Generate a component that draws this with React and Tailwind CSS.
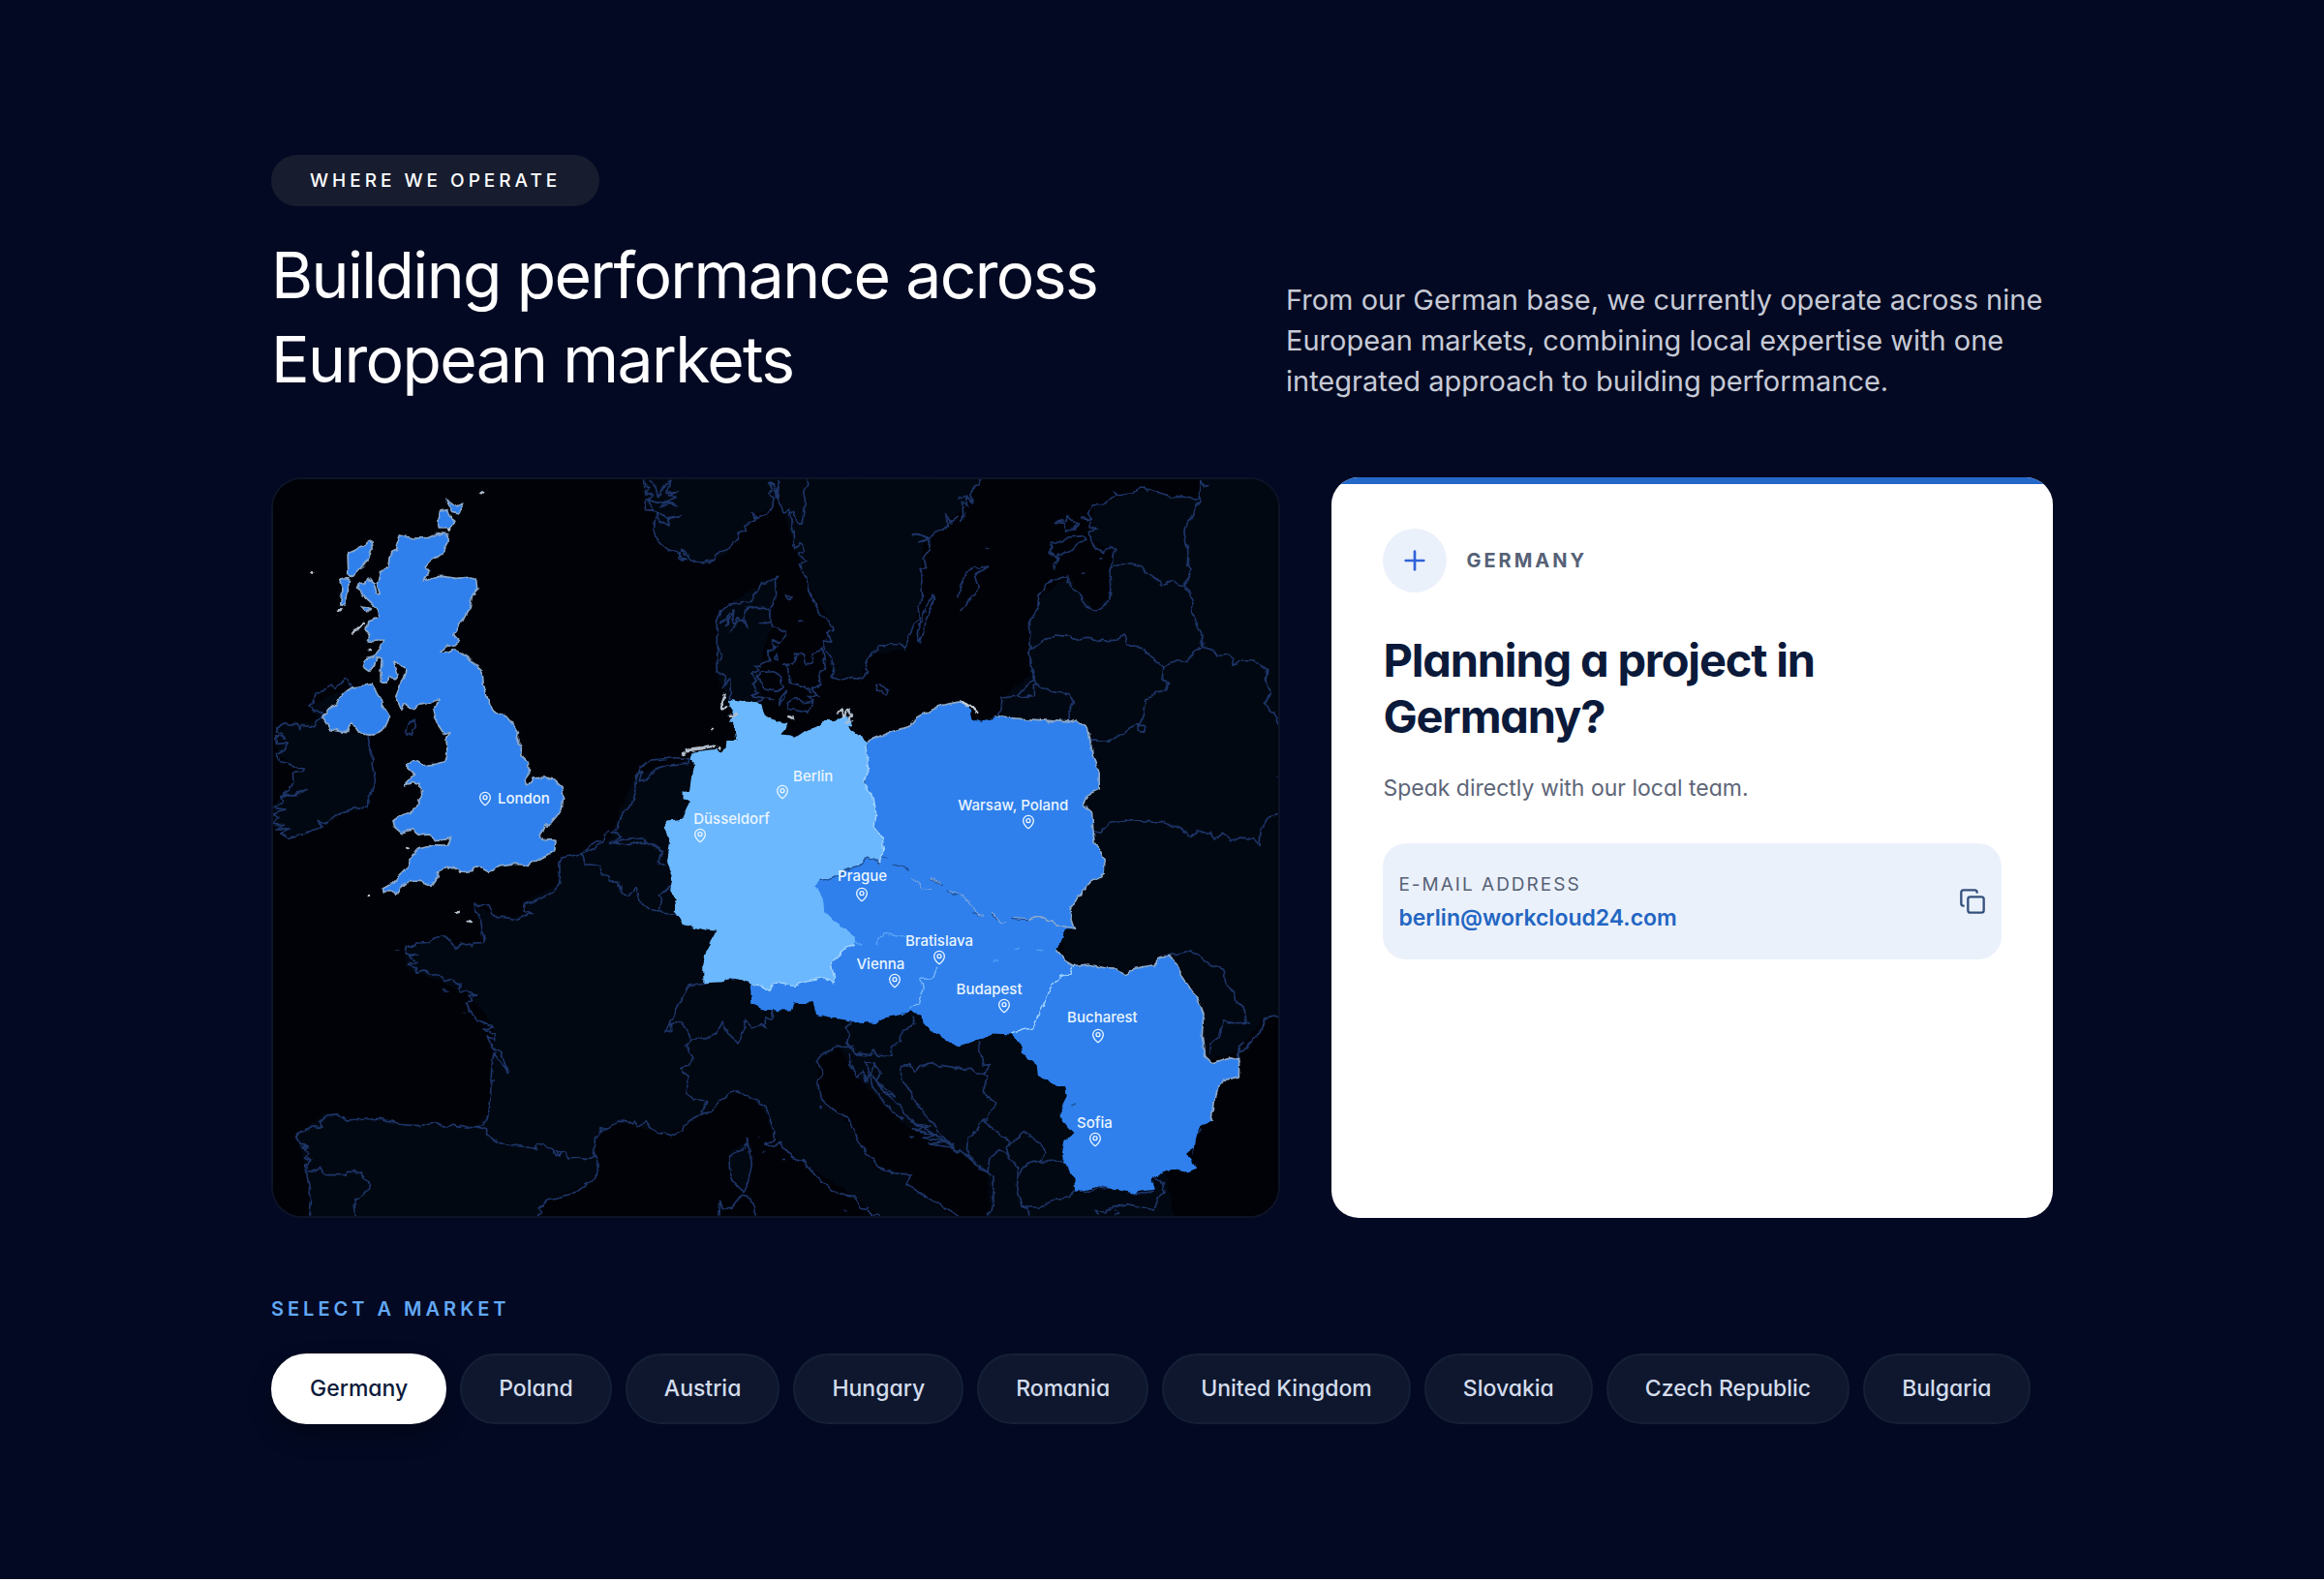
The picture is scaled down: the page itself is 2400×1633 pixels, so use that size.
import React, { useState } from 'react';
import { Copy, MapPin, Plus } from 'lucide-react';

const MARKETS = [
  'Germany',
  'Poland',
  'Austria',
  'Hungary',
  'Romania',
  'United Kingdom',
  'Slovakia',
  'Czech Republic',
  'Bulgaria',
];

const EMAIL = 'berlin@workcloud24.com';

// The map drawing uses this view box, city coordinates are in the same units
const VIEW = { x: 39, y: 45, width: 3111, height: 2283 };

const CITIES = [
  { name: 'London', label: [734, 1035], pin: [694, 1035] },
  { name: 'Berlin', label: [1648, 965], pin: [1615, 1015] },
  { name: 'Düsseldorf', label: [1340, 1098], pin: [1361, 1150] },
  { name: 'Warsaw, Poland', label: [2158, 1055], pin: [2376, 1107] },
  { name: 'Prague', label: [1786, 1276], pin: [1861, 1330] },
  { name: 'Bratislava', label: [1995, 1474], pin: [2101, 1526] },
  { name: 'Vienna', label: [1844, 1547], pin: [1962, 1598] },
  { name: 'Budapest', label: [2153, 1624], pin: [2301, 1677] },
  { name: 'Bucharest', label: [2496, 1713], pin: [2593, 1768] },
  { name: 'Sofia', label: [2526, 2040], pin: [2582, 2090] },
];

const LAND = [
  // Ireland
  'M270 690L150 750L190 790L60 810L50 900L130 940L70 1020L30 1060L30 1110L80 1150L150 1140L240 1080L330 1065L355 980L330 850L190 785Z',
  // Scandinavia
  'M1185 40L1190 120L1220 160L1220 220L1300 280L1360 305L1440 280L1480 220L1530 155L1590 130L1600 60L1620 150L1645 240L1670 300L1700 380L1770 500L1740 560L1775 660L1860 655L1880 590L1990 570L2040 430L2050 240L2160 150L2230 40Z',
  'M1415 640L1415 480L1450 430L1600 345L1580 500L1540 640L1550 730L1440 730Z',
  // East
  'M3160 40L2900 40L2908 105L2720 80L2580 130L2570 230L2640 270L2625 410L2580 450L2500 350L2420 400L2380 480L2380 650L2300 720L2280 785L2400 900L2500 1600L2900 1850L3020 1820L3100 1720L3160 1705Z',
  // West, Italy and the Balkans
  'M1325 910L1160 960L1110 1080L1080 1160L920 1230L920 1300L820 1350L830 1395L720 1400L660 1360L690 1480L600 1490L570 1460L450 1500L450 1560L480 1570L650 1640L720 1740L720 1820L705 2000L670 2050L440 2040L200 2010L110 2080L150 2200L155 2340L850 2340L880 2285L1010 2220L1045 2190L1035 2080L1080 2040L1110 2030L1250 2080L1370 2010L1460 1940L1540 1970L1600 2095L1700 2180L1830 2260L1920 2340L2160 2340L2010 2240L2000 2195L1900 2180L1820 2040L1730 1960L1720 1850L1790 1805L1850 1900L2000 2050L2160 2130L2250 2190L2260 2340L2830 2340L2800 2200L2500 1800L1700 1500Z',
  'M1500 2100L1450 2130L1450 2180L1495 2250L1520 2160Z',
];

// Coastlines and borders of the countries that are not highlighted, one group per map sector
const OUTLINES = [
  {
    at: 'translate(0 0)',
    d: [
      'M285 690L270 680L262 664L245 680L232 690L215 685L205 695L185 700L172 705L165 735L150 750L165 765L192 768L190 785L172 795L165 812L125 808L122 820L115 802L60 806L52 828L70 850L50 842L52 865L85 862L70 885L46 895L60 920L90 925L112 938L136 938L130 952L100 955L102 980L90 1005L66 1020L100 1022L145 1008L110 1025L62 1025L70 1045L40 1062L75 1068L36 1080L60 1095L40 1105L68 1120L50 1130L95 1130L62 1142L85 1156L140 1142L175 1125L190 1118L180 1105L200 1112L240 1080L280 1068L292 1058L328 1066L330 1040L345 1010L355 975L345 925L350 905L338 880L330 842',
      'M448 830L455 805L475 792L482 808L468 832L450 834Z',
      'M1000 1195L1030 1172L1062 1165L1060 1145L1080 1130',
    ],
  },
  {
    at: 'translate(1080 0)',
    d: [
      'M108 45L112 70L125 75L112 88L135 95L112 112L114 140L135 142L120 110L150 118L175 112L160 135L180 122L210 125L175 115L205 105L180 95L215 85L175 88L190 50L160 75L150 100L140 60L125 50',
      'M140 145L170 165L220 158L180 168L188 188L155 175L142 150L138 205L150 235L180 262L215 275L235 295L215 292L225 265L245 292L285 305L325 292L330 280L365 262L395 230L400 210L420 208L415 190L440 180L455 165L440 148L462 165L490 155L505 130L508 100L492 88L505 78L490 55L512 65L515 100L525 50L520 100L535 150L558 142L555 160L570 148L580 175L595 183L602 160L605 110L600 80L615 65L612 45',
      'M560 165L568 205L572 260L590 245L605 268L585 280L608 300L590 305L600 340L612 352L618 390L632 420L652 460L688 498L692 515L675 520L688 550L662 545L668 572L685 595L695 625L688 660L720 668L750 658L785 662L800 645L795 605L812 578L830 575L830 560L905 560L912 570L925 540L940 495L958 480L955 440L968 410L965 370L972 345L960 322L980 320L972 285L985 265L990 235L970 218L940 218L985 225L975 240L955 242L990 228L1010 208L1030 205L1045 180L1040 150L1055 180L1080 160',
      'M1002 402L980 440L965 480L952 520L958 552L972 510L988 460L1004 415Z',
      'M335 640L332 560L332 490L345 455L370 432L435 425L455 392L470 368L500 362L520 345L512 362L516 400L508 435L498 445L500 500L545 515L540 540L530 552L500 545L505 565L525 560L492 575L495 605L470 612L465 625L445 625L462 640L442 650L455 665L445 680L458 705L442 715L475 722L460 735',
      'M332 565L350 590L342 608M345 490L370 460L360 500L385 450L380 490L415 480L425 508L400 470L375 515M415 475L425 445L475 438L498 450M462 495L498 488M335 640L360 658L352 690L372 660L375 725',
      'M458 655L475 640L505 638L530 655L535 690L515 705L480 695L465 675ZM518 585L510 595L520 610ZM545 700L528 720L525 745L540 720ZM485 722L508 732M555 755L550 735L570 722L600 740L630 735L615 765L560 755M572 588L600 590L605 620L628 610L625 590L660 570L668 630L650 645L655 680L625 695L645 718L612 715L630 730M550 620L560 675L605 688L620 700M540 625L565 618L580 590',
      'M825 680L830 700L855 714L858 698L835 678ZM540 408L563 404L552 418ZM585 488L597 486',
      'M82 975L95 940L130 915L200 908L245 910L240 925L160 932L135 950L120 972L92 980L100 950L78 965L75 1020L60 1065L30 1095L22 1130L5 1140L40 1150L10 1170L60 1158L100 1155L115 1172L165 1200',
    ],
  },
  {
    at: 'translate(2160 0)',
    d: [
      'M70 45L60 65L45 70L35 95L45 120L25 100L30 130L10 115L15 160L5 175M0 105L25 100',
      'M5 450L20 435L45 410L55 392L60 375L50 350L60 335L90 315L60 320L45 318L20 345L5 380L0 410',
      'M748 105L700 103L655 98L600 78L560 72L540 90L490 92L470 100L445 125L415 125L400 145L412 170L380 165L405 172L405 195L430 200L405 208L410 235L425 262L450 272L470 255L482 262L478 300L468 325L470 400L455 430L425 452L390 440L380 405L335 365L335 345L270 370L248 405L245 445L220 475L222 560L222 620L235 660L180 718L135 722L132 755L115 785',
      'M225 570L260 545L300 528L340 532L355 540L400 538L455 545L490 543L508 525L522 555L565 565L600 600L635 627L660 608L710 610L735 572L755 565',
      'M468 325L495 310L535 302L575 325L600 345L630 375L660 362L695 375L710 355L720 325L708 305L710 270L698 215L700 190L720 170L738 125L748 110L740 85L745 50L760 65L775 62',
      'M695 375L705 390L728 415L718 455L735 485L750 520L755 565L790 575L800 590L835 585L850 595L848 622L880 605L915 605L955 635L950 670L965 700L948 742L975 765L990 810',
      'M222 575L225 640L240 680L265 695L300 705L340 710L355 735L345 760L345 790M235 680L235 715L185 720',
      'M635 627L628 670L650 675L640 695L610 702L600 722L578 728L570 780L560 800L530 815L505 835L475 855L410 855M555 805L575 805L572 825L555 822Z',
      'M415 1135L440 1140L465 1108L520 1100L570 1100L630 1108L675 1120L690 1135L720 1150L740 1138L780 1140L795 1160L820 1140L840 1168L870 1155L915 1160L932 1180L935 1130L960 1088L990 1082',
      'M298 178L330 172L340 152L355 180L370 185L355 200L335 210L325 182ZM285 240L320 240L340 222L385 218L395 235L375 240L345 272L310 280L298 320L290 310L305 290L282 270L290 250Z',
      'M82 255L90 258M383 337L388 336M438 291L443 290M985 965L989 966M480 82L490 95M575 70L585 82',
    ],
  },
  {
    at: 'translate(0 1170)',
    d: [
      'M1060 0L1030 20L995 35L930 48L922 65L925 130L905 155L860 175L820 190L812 215L840 218L795 238L720 228L708 195L662 192L668 215L682 240L690 310L660 312L655 325L650 312L620 315L602 326L585 300L570 290L540 295L520 310L480 312L450 325L447 345L488 350L460 352L485 372L452 380L480 388L482 405L505 398L550 412L570 430L590 425L620 440L620 460L640 465L670 470L645 475L655 490L635 495L645 515L672 550L722 572L690 578L722 590L725 610L702 602L718 635L750 662L765 715L745 680L722 650L715 700L712 780L700 850L688 875L640 885L595 875L580 882L540 868L520 870L490 877L445 875L370 855L320 858L265 860L235 842L210 845L185 865L188 880L140 888L112 905L112 925L125 940L148 940L130 950L150 965L140 975L155 985L140 1000L145 1035L158 1110L152 1157',
      'M145 1025L190 1005L200 1030L260 1030L270 1020L312 1022L318 1045L340 1060L325 1085L290 1112L295 1157',
      'M670 880L700 890L700 908L760 935L850 948L858 935L905 950L915 970L940 962L955 980L985 978L1005 985L1040 970L1045 1030L970 1085L885 1110L860 1130L870 1145L852 1157M915 952L935 962L925 972Z',
      'M1080 882L1055 885L1035 915L1032 970',
      'M995 35L1005 68L1045 70L1055 98L1075 105L1080 122',
      'M712 735L726 740L714 748M565 455L575 462M628 526L634 527M422 332L427 333',
    ],
  },
  {
    at: 'translate(1080 1170)',
    d: [
      'M0 0L50 8L100 0L140 10L165 28L150 60L172 70M0 120L30 120L38 160L60 165L80 140L90 178L130 212L195 220M155 210L162 180L155 160L185 140M195 220L210 225',
      'M290 435L250 442L235 465L210 505L180 570L175 588L190 585L188 562L225 558L250 612L295 608L330 590L350 558L365 590L398 620L412 595L420 550L440 572L475 565L482 578L482 545L508 545L500 510',
      'M250 612L235 628L258 665L245 692L222 700L245 728L238 775L260 795L300 800L285 838',
      'M0 880L25 860L70 870L80 860L85 880L110 865L120 880L150 900L190 910L225 895L230 875L280 840L320 830L350 790L380 770L415 778L475 808L495 845L510 895L512 925L480 935L508 942L530 930L560 975L595 985L640 1035L700 1085L755 1095L775 1130L800 1135L805 1157L835 1157',
      'M425 915L432 950L440 1000L428 1050L415 1080L385 1055L372 1020L370 975L395 955L420 945L428 918M340 1157L342 1110L350 1135L380 1130L410 1092L435 1100L455 1157',
      'M750 632L722 635L705 630L660 655L640 675L660 715L645 745L652 790L680 820L740 855L770 930L830 1005L870 1025L935 1028L918 1060L1000 1110L1080 1157',
      'M750 555L730 570L740 600L735 620L760 655L805 660L818 645L830 660L870 662L872 635L898 620L900 585L945 565L940 540M740 655L745 690L768 730L780 710L798 745L800 690L790 680L815 678L838 715L825 740L885 785L850 775L880 800L930 860L1000 900L1080 955',
      'M800 700L815 760L840 790L870 830L910 855M820 680L812 720L850 770L830 750M930 865L990 880L940 890L1010 905L970 915L1040 925L990 935L1060 945',
      'M905 690L930 688L945 710L960 692L1000 685L1080 700M905 690L905 735L930 770L950 810L1010 880L1030 910L1080 960',
      'M655 820L658 822M460 912L462 912M478 958L480 958M540 982L542 982M360 425L375 418L382 425M730 1138L732 1138M930 912L940 912',
    ],
  },
  {
    at: 'translate(2160 1170)',
    d: [
      'M640 350L680 345L715 335L760 365L790 385L825 395L830 445L855 465L860 500L885 520L890 558L850 560L820 550L808 600L778 625L775 655M890 558L900 560',
      'M990 537L950 545L930 590L890 635L865 655L868 630L885 620M865 655L868 668',
      'M0 698L40 700L55 715L90 720L75 770L110 810L90 855L70 865L60 885L28 915L25 960L60 1000L90 1025L95 980L125 955L150 965L185 1010L180 1080L195 1125L215 1132L218 1157M60 620L70 660L75 690L98 688L75 718',
      'M0 950L50 990L105 1035L105 1110L95 1157',
      'M80 865L130 905L165 930L145 945L150 965M165 930L190 912L205 895L235 920L270 955L255 985L215 995L190 1025M255 990L320 985',
      'M215 1130L255 1130L290 1105L345 1100L355 1080L410 1080L440 1068L500 1075L560 1090L600 1080M600 1040L635 1055L638 1085L618 1100L605 1140L570 1130L520 1120L480 1130L455 1145L420 1140L430 1157M485 1140L498 1150L485 1157',
      'M725 965L735 900L750 885',
    ],
  },
];

const UNITED_KINGDOM = [
  'M430 218L475 228L520 226L552 212L580 215L578 245L560 275L525 300L508 320L523 328L507 360L535 348L565 346L605 352L655 348L670 360L674 382L655 405L648 440L625 485L610 515L598 530L612 545L600 557L578 562L560 578L582 582L600 572L640 592L665 620L686 640L690 680L700 715L712 750L730 768L760 780L785 808L798 830L795 850L810 880L808 900L828 925L832 955L818 975L822 988L838 985L845 972L880 968L910 975L932 995L938 1030L932 1065L915 1090L898 1110L880 1118L872 1142L862 1152L880 1162L914 1164L910 1195L880 1212L830 1240L775 1236L735 1242L712 1260L690 1248L665 1245L655 1258L622 1262L600 1250L575 1245L548 1262L545 1282L530 1303L490 1290L455 1292L435 1310L420 1332L405 1322L378 1322L376 1310L395 1300L415 1298L430 1270L455 1245L470 1210L490 1188L520 1180L575 1182L590 1152L575 1160L545 1165L520 1145L490 1148L470 1130L435 1140L412 1120L408 1105L430 1088L460 1078L490 1052L498 1030L493 990L470 985L450 995L455 980L478 962L455 940L455 925L475 915L500 932L540 928L572 920L578 895L575 850L587 830L570 835L550 805L535 780L545 745L552 722L535 730L520 738L488 745L470 755L445 740L437 762L428 740L416 715L425 692L445 660L452 640L430 620L412 608L425 650L415 662L398 655L385 672L372 672L372 640L375 600L360 595L352 620L338 640L318 625L325 602L350 595L370 570L385 540L350 548L328 545L340 525L330 510L335 485L365 475L362 445L335 420L320 405L298 385L305 368L325 365L332 350L350 370L360 400L370 402L360 370L370 335L395 320L398 290L405 270L418 265L425 230Z',
  'M285 690L345 680L360 705L375 740L400 780L385 815L350 840L305 832L280 798L262 830L215 820L192 783L215 755L240 738L255 708Z',
  'M340 235L345 260L335 290L310 320L285 347L272 335L270 275L300 262Z',
  'M245 358L275 348L270 400L262 435L248 430L252 380Z',
  'M555 145L578 140L585 162L602 175L585 195L552 195L550 180Z',
  'M575 112L598 128L625 118L612 150L592 145Z',
  'M315 438L340 442L332 458Z',
];

const EASTERN_BLOCK =
  'M1880 855L1950 828L2012 808L2030 785L2080 755L2120 742L2160 735L2178 735L2192 750L2200 785L2230 797L2262 790L2275 782L2400 790L2510 798L2525 792L2560 820L2567 855L2575 900L2595 955L2595 1005L2560 1022L2545 1055L2572 1075L2576 1130L2580 1170L2600 1200L2612 1230L2610 1265L2595 1282L2575 1285L2540 1325L2505 1375L2508 1410L2518 1440L2490 1440L2465 1505L2490 1535L2518 1552L2560 1548L2610 1558L2650 1560L2672 1580L2700 1565L2765 1552L2780 1530L2810 1522L2835 1545L2860 1600L2900 1655L2918 1700L2913 1770L2920 1830L2945 1853L3000 1835L3028 1840L3027 1895L2985 1905L2960 1930L2948 1975L2942 2035L2905 2050L2895 2080L2890 2115L2865 2130L2895 2180L2870 2190L2830 2180L2790 2195L2755 2215L2765 2245L2700 2255L2640 2245L2600 2235L2560 2245L2520 2250L2518 2215L2485 2155L2480 2135L2487 2095L2515 2070L2480 2030L2480 1985L2495 1955L2490 1925L2465 1925L2440 1910L2405 1890L2402 1860L2355 1820L2350 1790L2320 1765L2270 1762L2230 1780L2160 1800L2130 1788L2080 1755L2030 1700L2010 1685L2000 1700L1975 1705L1920 1715L1900 1730L1840 1725L1780 1715L1720 1700L1708 1665L1650 1670L1640 1690L1560 1688L1520 1670L1515 1610L1700 1560L1780 1480L1700 1300L1850 1210Z';

const GERMANY =
  'M1450 728L1485 735L1520 733L1550 742L1560 775L1600 795L1632 800L1625 820L1613 835L1640 838L1655 845L1685 825L1720 812L1740 795L1780 795L1805 775L1825 785L1830 808L1815 815L1850 835L1880 860L1875 885L1883 940L1865 985L1895 1025L1905 1080L1900 1120L1925 1160L1928 1200L1915 1232L1880 1215L1850 1245L1815 1255L1770 1278L1735 1288L1718 1305L1740 1345L1745 1385L1770 1410L1835 1460L1838 1485L1815 1495L1765 1540L1778 1605L1750 1592L1690 1600L1655 1615L1595 1605L1575 1630L1550 1610L1515 1605L1485 1595L1450 1590L1435 1602L1370 1605L1370 1550L1380 1500L1410 1445L1365 1438L1340 1432L1308 1425L1290 1395L1278 1380L1288 1350L1265 1320L1275 1270L1258 1230L1268 1165L1245 1120L1260 1105L1308 1100L1315 1070L1330 1040L1305 1035L1305 1015L1330 1010L1342 930L1328 915L1335 890L1405 882L1425 890L1440 880L1442 855L1472 855L1465 800L1450 795L1465 765L1452 745Z';

const left = (x) => `${((x - VIEW.x) / VIEW.width) * 100}%`;
const top = (y) => `${((y - VIEW.y) / VIEW.height) * 100}%`;

const MapDrawing = () => (
  <svg
    viewBox={`${VIEW.x} ${VIEW.y} ${VIEW.width} ${VIEW.height}`}
    preserveAspectRatio="none"
    className="block h-full w-full"
    aria-hidden="true"
  >
    <defs>
      {/* breaks straight segments up into a ragged coastline */}
      <filter id="coast" filterUnits="userSpaceOnUse" x="0" y="0" width="3200" height="2400" colorInterpolationFilters="sRGB">
        <feTurbulence type="fractalNoise" baseFrequency="0.035" numOctaves="2" seed="4" result="noise" />
        <feDisplacementMap in="SourceGraphic" in2="noise" scale="18" xChannelSelector="R" yChannelSelector="G" />
      </filter>
    </defs>
    <rect x="0" y="0" width="3200" height="2400" fill="#010208" />
    <g filter="url(#coast)" strokeLinejoin="round" strokeLinecap="round">
      <g fill="#020812">
        {LAND.map((d) => <path key={d} d={d} />)}
      </g>
      <g fill="none" stroke="#1d3568" strokeWidth="5">
        {OUTLINES.map(({ at, d }) => (
          <g key={at} transform={at}>
            {d.map((line) => <path key={line} d={line} />)}
          </g>
        ))}
      </g>
      <g fill="#2f80ed" stroke="#8ea9c9" strokeWidth="5">
        {UNITED_KINGDOM.map((d) => <path key={d} d={d} />)}
      </g>
      <path d={EASTERN_BLOCK} fill="#2f80ed" />
      {/* lit coast and eastern edge */}
      <g fill="none" stroke="#8ea9c9" strokeWidth="5">
        <path d="M1880 855L1950 828L2012 808L2030 785L2080 755L2120 742L2160 735L2178 735L2192 750M2275 782L2400 790L2510 798L2525 792L2560 820L2567 855L2575 900L2595 955L2595 1005L2560 1022L2545 1055L2572 1075L2576 1130L2580 1170L2600 1200L2612 1230L2610 1265L2595 1282L2575 1285L2540 1325L2505 1375L2508 1410L2518 1440L2460 1422L2405 1398L2375 1408" />
        <path d="M2465 1505L2490 1535L2518 1552L2560 1548L2610 1558L2650 1560L2672 1580L2700 1565L2765 1552L2780 1530L2810 1522L2835 1545L2860 1600L2900 1655L2918 1700L2913 1770L2920 1830L2945 1853L3000 1835L3028 1840L3027 1895L2985 1905L2960 1930L2948 1975L2942 2035" />
      </g>
      <path d="M2170 735L2195 745L2215 768" fill="none" stroke="#c3cad3" strokeWidth="7" />
      <path d={GERMANY} fill="#6bb8ff" />
      {/* borders between highlighted countries */}
      <g fill="none" stroke="#a5d6ff" strokeWidth="4">
        <path d="M1875 870L1883 940L1865 985L1895 1025L1905 1080L1900 1120L1925 1160L1928 1200L1915 1232" />
        <path d="M1838 1485L1815 1495L1765 1540L1778 1605L1750 1592L1690 1600L1655 1615L1595 1605L1575 1630L1550 1610L1520 1607" />
        <path d="M2520 1552L2505 1575L2470 1590L2450 1615L2420 1680L2400 1720L2390 1745L2360 1750L2325 1762" />
        <path d="M2093 1560L2080 1590L2042 1590L2050 1620L2035 1670L2010 1680" stroke="#7fbcfb" />
        <path d="M1838 1475L1860 1488M1905 1485L1930 1450L1990 1465" stroke="#5aa2f6" />
        <path d="M2340 1500L2352 1500M2405 1500L2420 1502M2265 1536L2280 1536" stroke="#5aa2f6" />
      </g>
      <g fill="none" stroke="#1f4f94" strokeWidth="4">
        <path d="M1735 1288L1770 1278L1815 1255L1850 1245L1880 1215L1915 1232M1928 1218L1942 1215" />
        <path d="M1955 1238L1985 1245L2005 1256M2075 1282L2110 1300M2125 1320L2140 1332L2160 1331" />
        <path d="M2325 1405L2372 1408M2265 1390L2280 1410M2205 1388L2225 1398M2510 1985L2524 1978" />
      </g>
      <g fill="none" stroke="#84a9dc" strokeWidth="3">
        <path d="M2020 1282L2050 1318L2070 1315M2075 1280L2105 1296M2130 1322L2160 1331L2195 1352L2220 1395L2235 1398M2265 1385L2290 1420L2305 1420M2330 1402L2370 1405" />
      </g>
      {/* small islands */}
      <g fill="none" stroke="#b4bfcc" strokeWidth="8">
        <path d="M1436 710L1427 735L1430 758M1436 755L1445 748M1318 885L1360 880L1402 872M1304 894L1312 892M1450 776L1455 776M1462 778L1470 775M1634 780L1646 785" />
        <path d="M1785 770L1800 760L1805 782L1820 758L1828 775L1810 800L1832 792" strokeWidth="6" />
        <path d="M285 520L300 512L320 492M338 572L342 576M243 452L250 448M582 200L588 196M681 90L686 85M160 333L165 335" />
        <path d="M331 1333L334 1337M620 1263L622 1265M455 1188L457 1190M608 1390L616 1387M640 1416L650 1418M1397 819L1399 819M1415 877L1418 878" />
      </g>
    </g>
  </svg>
);

const MarketMap = () => (
  <div className="relative aspect-[1042/765] overflow-hidden rounded-[32px] border-2 border-[#0d1427] bg-[#010208]">
    <MapDrawing />
    {CITIES.map(({ name, label, pin }) => (
      <React.Fragment key={name}>
        <span
          className="absolute -translate-y-1/2 text-[15px] leading-5 font-medium whitespace-nowrap text-[#eaf5ff]"
          style={{ left: left(label[0]), top: top(label[1]) }}
        >
          {name}
        </span>
        <MapPin
          className="absolute size-4 -translate-x-1/2 -translate-y-1/2 text-[#eaf5ff]"
          style={{ left: left(pin[0]), top: top(pin[1]) }}
        />
      </React.Fragment>
    ))}
  </div>
);

const ContactCard = ({ market }) => (
  <div className="relative overflow-hidden rounded-[28px] bg-white p-[53px] [font-feature-settings:'cv11']">
    <div className="absolute inset-x-0 top-0 h-[7px] bg-[#2468c8]" />
    <div className="flex items-center gap-5">
      <span className="flex size-[66px] items-center justify-center rounded-full bg-[#ebf1fb]">
        <Plus className="size-8 text-[#2f62d9]" />
      </span>
      <span className="text-[20px] leading-7 font-bold tracking-[3px] text-[#566176] uppercase">{market}</span>
    </div>
    <h2 className="mt-[41px] text-[47px] leading-[58px] font-bold tracking-tight text-[#0b1a3a]">
      Planning a project in
      <br />
      {market}?
    </h2>
    <p className="mt-[25px] text-[23px] leading-10 text-[#5d6577]">Speak directly with our local team.</p>
    <div className="mt-[37px] flex items-center justify-between rounded-[24px] bg-[#ebf1fb] px-4 py-[25px]">
      <div>
        <p className="text-[19px] leading-[35px] tracking-[2px] text-[#566176] uppercase">E-mail address</p>
        <a href={`mailto:${EMAIL}`} className="block text-[23px] leading-[35px] font-semibold text-[#2366c2]">{EMAIL}</a>
      </div>
      <button type="button" aria-label="Copy e-mail address" onClick={() => navigator.clipboard.writeText(EMAIL)}>
        <Copy className="size-7 text-[#35507c]" />
      </button>
    </div>
  </div>
);

const App = () => {
  const [selected, setSelected] = useState('Germany');

  return (
    <section className="bg-[#030922] px-10 py-40 font-['Inter',sans-serif]">
      <div className="mx-auto max-w-[1840px]">
        <span className="inline-block rounded-full bg-[#171c2f] px-10 py-3 align-top text-[19px] leading-[29px] font-medium tracking-[4px] text-white uppercase">
          Where we operate
        </span>
        <div className="mt-7 grid grid-cols-[1fr_minmax(0,792px)] items-end">
          <h1 className="text-[66px] leading-[87px] tracking-tight text-white">
            Building performance across
            <br />
            European markets
          </h1>
          <p className="text-[29px] leading-[42px] text-[#c6cad6]">
            From our German base, we currently operate across nine European markets, combining local expertise with one
            integrated approach to building performance.
          </p>
        </div>

        <div className="mt-[78px] grid grid-cols-[1.4fr_1fr] gap-[53px]">
          <MarketMap />
          <ContactCard market={selected} />
        </div>

        <p className="mt-20 text-[20px] leading-7 font-semibold tracking-[4px] text-[#62a8f5] uppercase">Select a market</p>
        <div className="mt-8 flex flex-wrap gap-[14px] [font-feature-settings:'cv11']">
          {MARKETS.map((market) => (
            <button
              key={market}
              type="button"
              aria-pressed={market === selected}
              onClick={() => setSelected(market)}
              className={
                market === selected
                  ? 'rounded-full border-2 border-white bg-white px-[38px] py-4 text-[23px] leading-[37px] font-medium text-[#0b1a3a] shadow-[0_12px_24px_rgba(0,0,0,0.25)]'
                  : 'rounded-full border-2 border-[#152036] bg-[#0e172e] px-[38px] py-4 text-[23px] leading-[37px] font-medium text-[#d3dcec]'
              }
            >
              {market}
            </button>
          ))}
        </div>
      </div>
    </section>
  );
};

export default App;
